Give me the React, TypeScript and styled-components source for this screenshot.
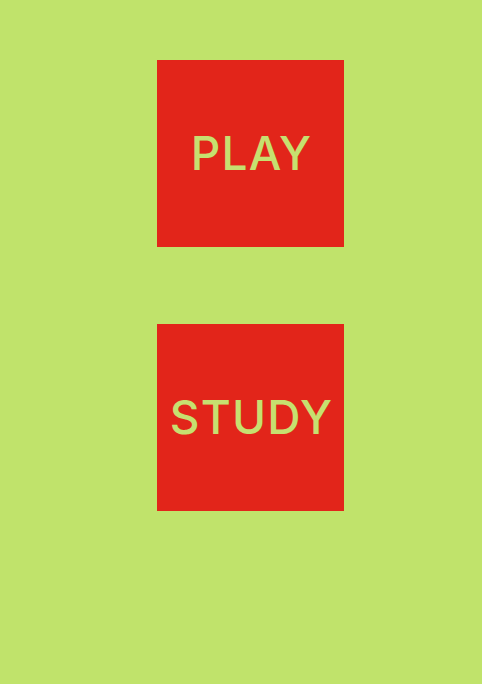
import React from "react";
import styled, { createGlobalStyle } from "styled-components";

const Global = createGlobalStyle`
  html, body { margin: 0; padding: 0; background: #c0e36b; }
  body { font-family: Inter, "Liberation Sans", sans-serif; }
`;

const Page = styled.div`
  width: 482px;
  height: 684px;
  display: flex;
  flex-direction: column;
  align-items: center;
  padding-top: 60px;
  box-sizing: border-box;
  gap: 77px;
  padding-left: 19px;
`;

const Tile = styled.button`
  width: 187px;
  height: 187px;
  background: #e2251a;
  border: none;
  padding: 0 0 2px 2px;
  display: flex;
  align-items: center;
  justify-content: center;
  color: #c6e070;
  font-family: Inter, "Liberation Sans", sans-serif;
  font-size: 46px;
  line-height: 1;
  font-weight: 500;
  letter-spacing: 1.2px;
  cursor: pointer;
`;

export default function App() {
  return (
    <>
      <Global />
      <Page>
        <Tile>PLAY</Tile>
        <Tile>STUDY</Tile>
      </Page>
    </>
  );
}
